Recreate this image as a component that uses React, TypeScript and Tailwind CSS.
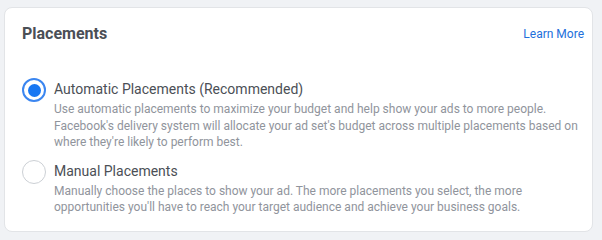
import React, { useState } from 'react';

interface PlacementOption {
  id: string;
  label: string;
  description: string;
}

const options: PlacementOption[] = [
  {
    id: 'automatic',
    label: 'Automatic Placements (Recommended)',
    description:
      "Use automatic placements to maximize your budget and help show your ads to more people. Facebook's delivery system will allocate your ad set's budget across multiple placements based on where they're likely to perform best.",
  },
  {
    id: 'manual',
    label: 'Manual Placements',
    description:
      "Manually choose the places to show your ad. The more placements you select, the more opportunities you'll have to reach your target audience and achieve your business goals.",
  },
];

const Radio = ({ checked }: { checked: boolean }) => (
  <span
    className={`flex h-6 w-6 shrink-0 items-center justify-center rounded-full bg-white ${
      checked ? 'border-2 border-[#3b86f0]' : 'border border-[#ccd0d5]'
    }`}
  >
    {checked && <span className="h-[13px] w-[13px] rounded-full bg-[#1877f2]" />}
  </span>
);

const App = () => {
  const [selected, setSelected] = useState('automatic');

  return (
    <div className="min-h-[240px] bg-[#f0f2f5] pl-[4px] pr-[9px] pt-[7px] font-['Roboto',sans-serif]">
      <div className="rounded-lg border border-[#e2e4e7] bg-white pb-[15px] pl-[17px] pr-[8px] pt-[16px]">
        <div className="flex items-center justify-between">
          <h3 className="text-[16px] font-bold leading-5 text-[#4b4f56]">Placements</h3>
          <a href="#" className="text-[12px] leading-5 text-[#216fdb]">
            Learn More
          </a>
        </div>

        <div className="mt-[35px] flex flex-col gap-[10px]">
          {options.map((opt) => (
            <label
              key={opt.id}
              className="flex cursor-pointer items-start gap-2"
              onClick={() => setSelected(opt.id)}
            >
              <span className="-mt-[1px]">
                <Radio checked={selected === opt.id} />
              </span>
              <div>
                <div className="text-[14px] leading-5 text-[#4b4f56]">{opt.label}</div>
                <div className="mt-[2px] text-[12px] leading-[16.5px] text-[#90949c]">
                  {opt.description}
                </div>
              </div>
            </label>
          ))}
        </div>
      </div>
    </div>
  );
};

export default App;
